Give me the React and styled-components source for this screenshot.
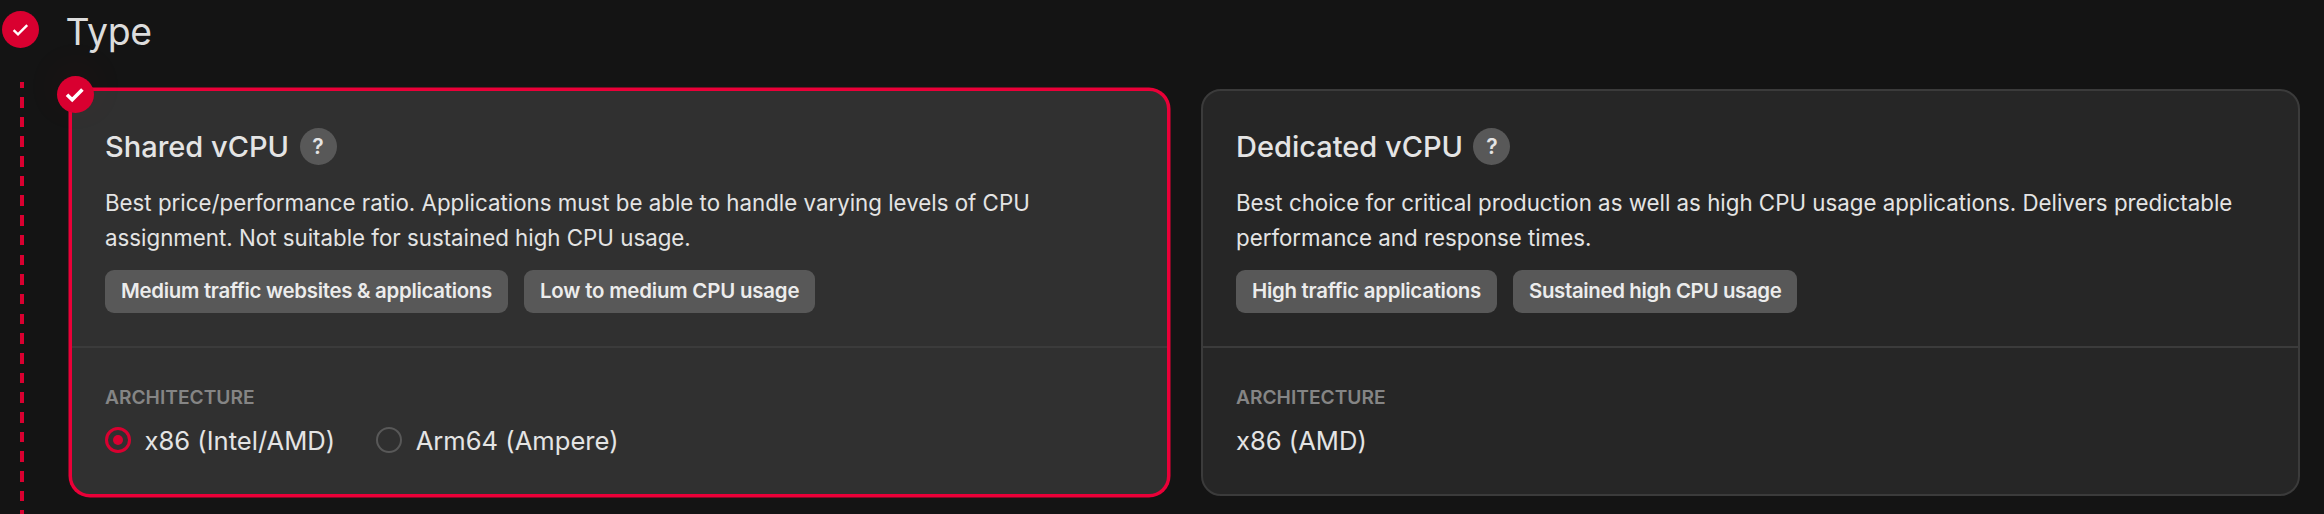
import React from "react";
import styled, { createGlobalStyle } from "styled-components";

const red = "#d90030";

const GlobalStyle = createGlobalStyle`
  * { box-sizing: border-box; }
  body {
    margin: 0;
    overflow: hidden;
    background: #141414;
    color: #e4e4e4;
    font-family: "Inter", "Liberation Sans", sans-serif;
    font-feature-settings: "calt" 0;
  }
`;

const Step = styled.section`
  display: flex;
  height: 514px;
  padding-left: 2px;
`;

const Rail = styled.div`
  display: flex;
  flex-direction: column;
  align-items: center;
  width: 37px;
  padding-top: 11px;
  flex: none;
`;

const Disc = styled.span`
  display: flex;
  align-items: center;
  justify-content: center;
  width: 37px;
  height: 37px;
  border-radius: 50%;
  background: ${red};
  flex: none;
`;

const Dashes = styled.div`
  flex: 1;
  width: 4px;
  margin: 34px 0 0 3px;
  background: repeating-linear-gradient(
    to bottom,
    ${red} 0 10.6px,
    transparent 10.6px 19.68px
  ) 0 -4.6px / 4px 600px;
`;

const Body = styled.div`
  flex: 1;
  padding: 0 24px 0 31px;
`;

const Heading = styled.h2`
  height: 89px;
  margin: 0 0 0 -4.5px;
  padding-top: 9px;
  font-size: 37.4px;
  font-weight: 400;
  line-height: 46px;
  letter-spacing: -0.3px;
  color: #dcdcdc;
`;

const Cards = styled.div`
  display: grid;
  grid-template-columns: 1fr 1fr;
  gap: 32px;
`;

const Card = styled.article`
  position: relative;
  height: 407px;
  border: 2px solid ${(p) => (p.$selected ? "#ea0038" : "#3b3b3b")};
  border-radius: 20px;
  background: ${(p) => (p.$selected ? "#303030" : "#262626")};
  box-shadow: ${(p) => (p.$selected ? "0 0 0 1.5px #ea0038" : "none")};
`;

const CardBadge = styled(Disc)`
  position: absolute;
  left: -15.5px;
  top: -15.5px;
  box-shadow: 0 -8px 40px rgba(217, 0, 48, 0.07);
`;

const Summary = styled.div`
  height: 257px;
  padding: 37px 33px 0;
  border-bottom: 2px solid #3b3b3b;
`;

const TitleRow = styled.div`
  display: flex;
  align-items: center;
  gap: 10.5px;
  height: 37px;
`;

const Title = styled.h3`
  margin: 0;
  font-size: 29px;
  font-weight: 500;
`;

const Help = styled.span`
  display: flex;
  align-items: center;
  justify-content: center;
  width: 37px;
  height: 37px;
  border-radius: 50%;
  background: #585858;
  font-size: 21px;
  font-weight: 600;
`;

const Description = styled.p`
  margin: 21px 0 15px;
  font-size: 22.3px;
  line-height: 34.7px;
`;

const Tags = styled.div`
  display: flex;
  gap: 16px;
`;

const Tag = styled.span`
  height: 43px;
  padding: 0 16px;
  border-radius: 9px;
  background: #585858;
  font-size: 20.4px;
  font-weight: 600;
  letter-spacing: ${(p) => p.$tracking}px;
  line-height: 42px;
  color: #ececec;
`;

const Architecture = styled.div`
  padding: 36px 33px 0;
`;

const Label = styled.div`
  margin-bottom: 14px;
  font-size: 19.2px;
  font-weight: 600;
  line-height: 26px;
  color: #858585;
`;

const Options = styled.div`
  display: flex;
  gap: 41px;
`;

const Option = styled.div`
  display: flex;
  align-items: center;
  gap: 13.5px;
  height: 32px;
  font-size: 25.6px;
`;

const Radio = styled.span`
  display: flex;
  align-items: center;
  justify-content: center;
  width: 26px;
  height: 26px;
  border: ${(p) => (p.$on ? `3px solid ${red}` : "2px solid #585858")};
  border-radius: 50%;

  &::after {
    content: "";
    width: 10px;
    height: 10px;
    border-radius: 50%;
    background: ${(p) => (p.$on ? red : "transparent")};
  }
`;

function Check({ weight }) {
  return (
    <svg width="37" height="37" viewBox="0 0 37 37" fill="none">
      <path
        d={weight > 3 ? "M10 18.8L15.2 23.8L25.4 13.4" : "M11.6 19.2L16 23.4L25.2 14.2"}
        stroke="#fff"
        strokeWidth={weight}
      />
    </svg>
  );
}

const plans = [
  {
    title: "Shared vCPU",
    selected: true,
    text: [
      "Best price/performance ratio. Applications must be able to handle varying levels of CPU",
      "assignment. Not suitable for sustained high CPU usage.",
    ],
    tags: [
      { name: "Medium traffic websites & applications", tracking: -0.28 },
      { name: "Low to medium CPU usage", tracking: -0.18 },
    ],
    options: ["x86 (Intel/AMD)", "Arm64 (Ampere)"],
  },
  {
    title: "Dedicated vCPU",
    text: [
      "Best choice for critical production as well as high CPU usage applications. Delivers predictable",
      "performance and response times.",
    ],
    tags: [
      { name: "High traffic applications", tracking: -0.26 },
      { name: "Sustained high CPU usage", tracking: -0.33 },
    ],
    options: ["x86 (AMD)"],
  },
];

function Plan({ title, selected, text, tags, options }) {
  return (
    <Card $selected={selected}>
      {selected && (
        <CardBadge>
          <Check weight={3.6} />
        </CardBadge>
      )}
      <Summary>
        <TitleRow>
          <Title>{title}</Title>
          <Help>?</Help>
        </TitleRow>
        <Description>
          {text[0]}
          <br />
          {text[1]}
        </Description>
        <Tags>
          {tags.map((tag) => (
            <Tag key={tag.name} $tracking={tag.tracking}>
              {tag.name}
            </Tag>
          ))}
        </Tags>
      </Summary>
      <Architecture>
        <Label>ARCHITECTURE</Label>
        <Options>
          {options.map((name, i) => (
            <Option key={name}>
              {options.length > 1 && <Radio $on={i === 0} />}
              {name}
            </Option>
          ))}
        </Options>
      </Architecture>
    </Card>
  );
}

export default function App() {
  return (
    <>
      <GlobalStyle />
      <Step>
        <Rail>
          <Disc>
            <Check weight={2.4} />
          </Disc>
          <Dashes />
        </Rail>
        <Body>
          <Heading>Type</Heading>
          <Cards>
            {plans.map((plan) => (
              <Plan key={plan.title} {...plan} />
            ))}
          </Cards>
        </Body>
      </Step>
    </>
  );
}
